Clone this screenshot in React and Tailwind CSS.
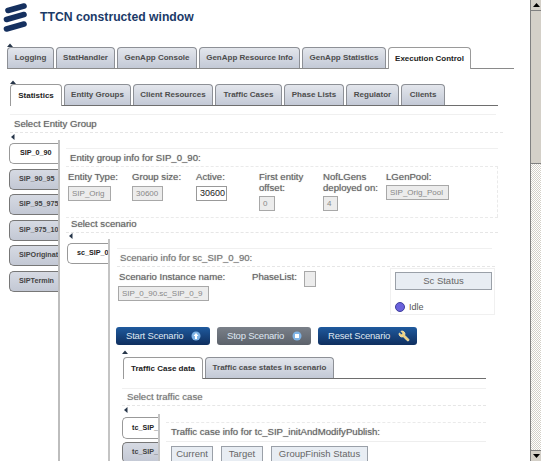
import React from "react";
import { Wrench } from "lucide-react";

const outerTabs = [
  { label: "Logging", w: "w-[47px]" },
  { label: "StatHandler", w: "w-[59px]" },
  { label: "GenApp Console", w: "w-[80px]" },
  { label: "GenApp Resource Info", w: "w-[101px]" },
  { label: "GenApp Statistics", w: "w-[84px]" },
  { label: "Execution Control", w: "w-[83px]", active: true },
];

const innerTabs = [
  { label: "Statistics", w: "w-[52px]", active: true },
  { label: "Entity Groups", w: "w-[67px]" },
  { label: "Client Resources", w: "w-[80px]" },
  { label: "Traffic Cases", w: "w-[67px]" },
  { label: "Phase Lists", w: "w-[60px]" },
  { label: "Regulator", w: "w-[53px]" },
  { label: "Clients", w: "w-[44px]" },
];

const groups = ["SIP_90_95", "SIP_95_975", "SIP_975_10", "SIPOriginat", "SIPTermin"];

const Arrow = ({ dir = "up", className = "" }) => (
  <svg width="6" height="6" viewBox="0 0 6 6" className={`block ${className}`}>
    <path d={dir === "up" ? "M0 5 L3 1.5 L6 5 Z" : "M4.5 0 L1 3 L4.5 6 Z"} fill="#27364a" />
  </svg>
);

const Tab = ({ label, w, active }) => (
  <div
    className={`${w} shrink-0 rounded-t-[4px] border border-b-0 flex items-center justify-center text-[8px] font-bold whitespace-nowrap ${
      active
        ? "h-[22px] border-[#9a9a9a] bg-white text-[#222] relative"
        : "h-[21px] border-[#8d9096] bg-gradient-to-b from-[#e3e6ec] to-[#c3c9d6] text-[#4d4d4d]"
    }`}
  >
    {label}
  </div>
);

const SideTab = ({ label, active, className = "" }) => (
  <div
    className={`h-[21px] rounded-l-[5px] border border-r-0 flex items-center pl-[9px] text-[7.2px] font-bold overflow-hidden whitespace-nowrap ${
      active ? "border-[#999] bg-white text-[#222]" : "border-[#777] bg-gradient-to-b from-[#d6dae3] to-[#c3c8d4] text-[#444]"
    } ${className}`}
  >
    {label}
  </div>
);

const Field = ({ children, w, white, className = "" }) => (
  <div
    className={`${w} h-[15px] border flex items-center px-[3px] font-normal [text-shadow:none] whitespace-nowrap overflow-hidden ${
      white ? "text-[9px] border-[#999] bg-white text-[#222]" : "text-[8px] border-[#a8a8a8] bg-[#ececec] text-[#888]"
    } ${className}`}
  >
    {children}
  </div>
);

const FieldCol = ({ w, children }) => (
  <div className={`${w} shrink-0 text-[9.6px] leading-[11px] text-[#666] [text-shadow:0_0_1px_#999] whitespace-nowrap`}>{children}</div>
);

const ActionButton = ({ label, w, gray, children }) => (
  <div
    className={`${w} h-[18px] rounded-[3px] flex items-center gap-[8px] pl-[10px] text-[9.5px] tracking-[-0.2px] whitespace-nowrap text-[#dfe7f2] ${
      gray ? "bg-gradient-to-b from-[#7a8089] to-[#5c626b]" : "bg-gradient-to-b from-[#1f5a9e] to-[#0f2f5f]"
    }`}
  >
    {label}
    {children}
  </div>
);

const Dot = ({ glyph }) => (
  <svg width="10" height="10" viewBox="0 0 10 10">
    <circle cx="5" cy="5" r="4.5" fill="#7fb4e6" />
    {glyph === "up" ? (
      <path d="M5 2 L7.5 5 L6 5 L6 8 L4 8 L4 5 L2.5 5 Z" fill="#fff" />
    ) : (
      <rect x="3" y="3" width="4" height="4" fill="#fff" />
    )}
  </svg>
);

const StatusCell = ({ w, children }) => (
  <div className={`${w} h-[17px] shrink-0 border border-[#9aa0a8] bg-[#e8edf3] text-[9.5px] text-[#666] flex items-center justify-center whitespace-nowrap`}>
    {children}
  </div>
);

export default function App() {
  return (
    <div className="flex w-[541px] h-[461px] overflow-hidden bg-white font-['Liberation_Sans',Arial,sans-serif]">
      <div className="w-[530px] shrink-0">
        {/* Header */}
        <div className="h-[42px] flex items-start">
          <svg width="28" height="34" viewBox="0 0 28 34">
            <g stroke="#15305f" strokeWidth="5.6" strokeLinecap="round">
              <line x1="8" y1="10.5" x2="24" y2="6" />
              <line x1="6.5" y1="19.5" x2="24" y2="14.5" />
              <line x1="6.5" y1="29" x2="24" y2="24" />
            </g>
          </svg>
          <div className="ml-[12px] mt-[8px] text-[12.2px] leading-[18px] font-bold text-[#1b3a68] whitespace-nowrap">
            TTCN constructed window
          </div>
        </div>

        {/* Outer tabs */}
        <div className="pl-[7px]">
          <Arrow />
          <div className="w-[507px] flex gap-[2px] border-b border-[#8a8a8a] h-[22px] mt-[-1px]">
            {outerTabs.map((t) => (
              <Tab key={t.label} {...t} />
            ))}
          </div>
        </div>

        {/* Inner tabs */}
        <div className="pl-[10px] pt-[10px]">
          <Arrow />
          <div className="w-[488px] flex gap-[2px] border-b border-[#6e6e6e] h-[22px] mt-[-1px]">
            {innerTabs.map((t) => (
              <Tab key={t.label} {...t} />
            ))}
          </div>
        </div>

        {/* Select Entity Group */}
        <div className="ml-[10px] mt-[8px] w-[486px] border-t border-[#f0f0f0] pt-[3px] pl-[4px] h-[18px] text-[9.6px] leading-[12px] text-[#666] [text-shadow:0_0_1px_#999]">
          Select Entity Group
        </div>
        <div className="ml-[10px] w-[493px] border-t border-dashed border-[#e6e6e6] pt-[1px]">
          <Arrow dir="left" />
        </div>

        <div className="flex">
          {/* Entity groups */}
          <div className="ml-[9px] mt-[3px] w-[49px] shrink-0 flex flex-col gap-[4.5px]">
            <SideTab label="SIP_0_90" active className="pl-[10px]" />
            {groups.map((g) => (
              <SideTab key={g} label={g} />
            ))}
          </div>

          {/* Entity group panel */}
          <div className="border-l-2 border-[#bdbdbd] pl-[6px] pt-[8px] h-[330px]">
            <div className="w-[432px] border-t border-[#f0f0f0] pl-[4px] pt-[3px] h-[18px] text-[9.6px] leading-[12px] text-[#666] [text-shadow:0_0_1px_#999] whitespace-nowrap">
              Entity group info for SIP_0_90:
            </div>
            <div className="w-[432px] border-t border-r border-dashed border-[#eaeaea] pt-[4px] pl-[2px] flex h-[51px]">
              <FieldCol w="w-[64px]">
                <div className="mb-[4px]">Entity Type:</div>
                <Field w="w-[43px]">SIP_Orig</Field>
              </FieldCol>
              <FieldCol w="w-[64px]">
                <div className="mb-[4px]">Group size:</div>
                <Field w="w-[31px]">30600</Field>
              </FieldCol>
              <FieldCol w="w-[63px]">
                <div className="mb-[4px]">Active:</div>
                <Field w="w-[31px]" white>30600</Field>
              </FieldCol>
              <FieldCol w="w-[64px]">
                <div className="mb-[3px]">First entity<br />offset:</div>
                <Field w="w-[16px]">0</Field>
              </FieldCol>
              <FieldCol w="w-[63px]">
                <div className="mb-[3px]">NofLGens<br />deployed on:</div>
                <Field w="w-[15px]">4</Field>
              </FieldCol>
              <FieldCol w="w-[63px]">
                <div className="mb-[3px]">LGenPool:</div>
                <Field w="w-[63px]">SIP_Orig_Pool</Field>
              </FieldCol>
            </div>

            <div className="w-[432px] h-[15px] border-t border-dashed border-[#eaeaea] pl-[5px] text-[9.6px] leading-[12px] text-[#666] [text-shadow:0_0_1px_#999]">
              Select scenario
            </div>
            <div className="w-[432px] border-t border-dashed border-[#e6e6e6]">
              <Arrow dir="left" className="ml-[2px]" />
            </div>

            <div className="flex">
              {/* Scenarios */}
              <div className="ml-[1px] mt-[4px] w-[41px] shrink-0">
                <SideTab label="sc_SIP_0" active />
              </div>

              {/* Scenario panel */}
              <div className="border-l-2 border-[#c4c4c4] pl-[7px] pt-[9px] h-[230px]">
                <div className="w-[375px] border-t border-[#f0f0f0] pl-[3px] pt-[3px] h-[18px] text-[9.6px] leading-[12px] text-[#777] [text-shadow:0_0_1px_#aaa]">
                  Scenario info for sc_SIP_0_90:
                </div>
                <div className="w-[378px] border-t border-dashed border-[#e6e6e6] flex h-[61px]">
                  <div className="w-[133px] shrink-0 pl-[1px] pt-[4px] text-[9.6px] text-[#666]">
                    <div className="leading-[12px] mb-[3px] pl-[1px] whitespace-nowrap [text-shadow:0_0_1px_#999]">Scenario Instance name:</div>
                    <Field w="w-[91px]">SIP_0_90.sc_SIP_0_9</Field>
                  </div>
                  <div className="w-[140px] shrink-0 flex items-start pt-[4px] pl-[2px]">
                    <div className="text-[9.6px] text-[#666] [text-shadow:0_0_1px_#999] leading-[12px] w-[52px]">PhaseList:</div>
                    <div className="w-[12px] h-[16px] border border-[#a8a8a8] bg-[#ececec]" />
                  </div>
                  <div className="w-[105px] h-[47px] mt-[1px] shrink-0 border border-[#f0f0f0] pl-[4px] pt-[3px] flex flex-col">
                    <div className="w-[97px] h-[18px] border border-[#9aa0a8] bg-[#e8edf3] flex items-center justify-center text-[9.5px] text-[#666]">
                      Sc Status
                    </div>
                    <div className="flex items-center mt-[11px] text-[9px] text-[#555]">
                      <span className="w-[10px] h-[10px] rounded-full bg-[#6a62dc] border border-[#3f3f9c]" />
                      <span className="ml-[4px]">Idle</span>
                    </div>
                  </div>
                </div>

                <div className="flex gap-[7px] -ml-[1px]">
                  <ActionButton label="Start Scenario" w="w-[94px]">
                    <Dot glyph="up" />
                  </ActionButton>
                  <ActionButton label="Stop Scenario" w="w-[94px]" gray>
                    <Dot />
                  </ActionButton>
                  <ActionButton label="Reset Scenario" w="w-[99px]">
                    <Wrench size={12} className="-scale-x-100" fill="#f2d27a" stroke="#f7e7b8" strokeWidth={1.5} />
                  </ActionButton>
                </div>

                {/* Traffic case tabs */}
                <Arrow className="ml-[5px] mt-[4px]" />
                <div className="w-[363px] ml-[6px] mt-[2px] flex gap-[2px] border-b border-[#6e6e6e] h-[22px]">
                  <Tab label="Traffic Case data" w="w-[80px]" active />
                  <Tab label="Traffic case states in scenario" w="w-[129px]" />
                </div>

                <div className="ml-[5px] mt-[9px] w-[364px] border-t border-[#f0f0f0] pl-[5px] pt-[2px] h-[17px] text-[9.6px] leading-[12px] text-[#777] [text-shadow:0_0_1px_#aaa]">
                  Select traffic case
                </div>
                <div className="ml-[5px] w-[364px] border-t border-dashed border-[#e6e6e6] pt-[1px]">
                  <Arrow dir="left" className="ml-[1px]" />
                </div>

                <div className="flex ml-[5px]">
                  {/* Traffic cases */}
                  <div className="mt-[4px] w-[36px] shrink-0 flex flex-col gap-[3px]">
                    <SideTab label="tc_SIP_" active className="h-[22px]" />
                    <SideTab label="tc_SIP_" />
                  </div>

                  {/* Traffic case panel */}
                  <div className="border-l-2 border-[#c4c4c4] mt-[1px] pl-[6px] pt-[8px] h-[60px]">
                    <div className="w-[320px] pl-[5px] pt-[3px] h-[19px] border-t border-dashed border-[#eaeaea] text-[9.6px] leading-[12px] text-[#666] [text-shadow:0_0_1px_#999] whitespace-nowrap">
                      Traffic case info for tc_SIP_initAndModifyPublish:
                    </div>
                    <div className="flex gap-[8px] pl-[5px] pt-[4px] border-t border-[#eeeeee] w-[320px]">
                      <StatusCell w="w-[42px]">Current</StatusCell>
                      <StatusCell w="w-[42px]">Target</StatusCell>
                      <StatusCell w="w-[97px]">GroupFinish Status</StatusCell>
                    </div>
                  </div>
                </div>
              </div>
            </div>
          </div>
        </div>
      </div>

      {/* Browser scrollbar */}
      <div className="w-[11px] shrink-0 flex flex-col border-l border-[#808080] bg-[conic-gradient(#d4d0c8_25%,#ffffff_0_50%,#d4d0c8_0_75%,#ffffff_0)] bg-[length:2px_2px]">
        <div className="h-[11px] bg-[#d4d0c8] border-b border-[#808080] flex items-center justify-center">
          <svg width="7" height="4" viewBox="0 0 7 4"><path d="M0 4 L3.5 0 L7 4 Z" fill="#000" /></svg>
        </div>
        <div className="h-[153px] bg-[#d4d0c8] border-b border-[#808080]" />
        <div className="mt-auto h-[11px] bg-[#d4d0c8] border-t border-[#808080] flex items-center justify-center">
          <svg width="7" height="4" viewBox="0 0 7 4"><path d="M0 0 L3.5 4 L7 0 Z" fill="#000" /></svg>
        </div>
      </div>
    </div>
  );
}
